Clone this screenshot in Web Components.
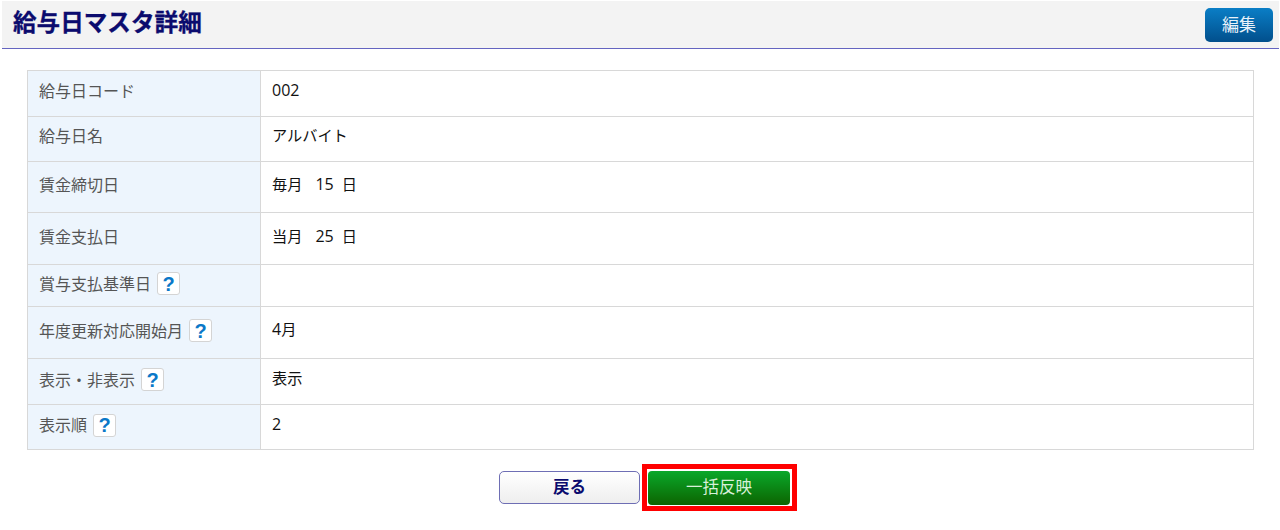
<!DOCTYPE html>
<html lang="ja"><head><meta charset="utf-8"><title>給与日マスタ詳細</title>
<style>
html,body{margin:0;padding:0;background:#fff;font-family:"Open Sans","Noto Sans CJK JP",sans-serif;}
body{width:1280px;height:530px;overflow:hidden;}
.n{font-size:16px;}
.g1{margin-left:13px;}
.g2{margin-left:8px;}
</style></head><body>
<page-header>給与日マスタ詳細<app-btn slot="action" kind="blue">編集</app-btn></page-header>
<detail-table>
<detail-row h="46"><span slot="label">給与日コード</span><span class="n">002</span></detail-row>
<detail-row h="45"><span slot="label">給与日名</span>アルバイト</detail-row>
<detail-row h="51" mid><span slot="label">賃金締切日</span>毎月<span class="n g1">15</span><span class="g2">日</span></detail-row>
<detail-row h="52" mid><span slot="label">賃金支払日</span>当月<span class="n g1">25</span><span class="g2">日</span></detail-row>
<detail-row h="42" top><span slot="label">賞与支払基準日</span><help-mark slot="label"></help-mark></detail-row>
<detail-row h="52" top><span slot="label">年度更新対応開始月</span><help-mark slot="label"></help-mark><span class="n">4</span>月</detail-row>
<detail-row h="46" top><span slot="label">表示・非表示</span><help-mark slot="label"></help-mark>表示</detail-row>
<detail-row h="45" top last><span slot="label">表示順</span><help-mark slot="label"></help-mark><span class="n">2</span></detail-row>
</detail-table>
<button-bar><app-btn kind="back">戻る</app-btn><mark-box><app-btn kind="green">一括反映</app-btn></mark-box></button-bar>
<script>
function def(name,css,html,init){
  customElements.define(name,class extends HTMLElement{
    constructor(){super();this.attachShadow({mode:'open'}).innerHTML='<style>'+css+'</style>'+html;}
    connectedCallback(){if(init)init(this);}
  });
}
const FONT='"Open Sans","Noto Sans CJK JP",sans-serif';
def('page-header',`
:host{display:flex;align-items:center;justify-content:space-between;box-sizing:border-box;height:48px;margin:1px 1px 0 2px;padding:0 6px 0 11px;background:#f3f3f3;border-bottom:1px solid #6464c0;}
.t{font:bold 23.6px/1 ${FONT};color:#0b0b6e;-webkit-text-stroke:.3px #0b0b6e;margin-bottom:4px;}
`,`<div class="t"><slot></slot></div><slot name="action"></slot>`);
def('detail-table',`
:host{display:block;margin:21px 26px 0 27px;border:1px solid #d8d8d8;border-bottom:0;}
`,`<slot></slot>`);
def('detail-row',`
:host{display:grid;grid-template-columns:233px 1fr;box-sizing:border-box;border-bottom:1px solid #d8d8d8;font:15.2px/20px ${FONT};color:#111;}
.l{background:#edf5fd;border-right:1px solid #d8d8d8;padding:0 0 6px 11px;color:#555;display:flex;align-items:center;font-size:16px;}
.v{padding:0 0 8px 11px;display:flex;align-items:center;}
.v span{display:inline-flex;align-items:center;}
:host([top]) .l{padding-bottom:4px;}
:host([mid]) .l{padding-bottom:4px;}
:host([mid]) .v{padding-bottom:6px;}
:host([last]) .v{padding-bottom:6px;}
`,`<div class="l"><slot name="label"></slot></div><div class="v"><span><slot></slot></span></div>`,
el=>{el.style.height=el.getAttribute('h')+'px';});
def('help-mark',`
:host{display:inline-flex;align-items:center;justify-content:center;box-sizing:border-box;width:23px;height:23px;margin-left:6px;background:#fff;border:1px solid #d4d4d4;border-radius:3px;font:bold 20px/1 "Liberation Sans",sans-serif;color:#0a78c8;}
`,`?`);
def('app-btn',`
:host{display:inline-flex;align-items:center;justify-content:center;box-sizing:border-box;font:16.5px/1 ${FONT};border-radius:4px;}
:host([kind=blue]){width:68px;height:34px;background:linear-gradient(#0a7ec6,#014f8c);color:#e8f2fa;border-radius:5px;font-size:17px;}
:host([kind=back]){width:141px;height:33px;background:linear-gradient(#fff,#eee);border:1px solid #6e6eb4;border-radius:5px;color:#0b0b6e;font-weight:bold;}
:host([kind=green]){width:142px;height:34px;background:linear-gradient(#0aa82a,#0c6400);color:#d8f0d8;}
`,`<slot></slot>`);
def('mark-box',`
:host{display:block;box-sizing:border-box;border:5px solid #f00;padding:1.5px 2px 1.5px 1px;line-height:0;}
`,`<slot></slot>`);
def('button-bar',`
:host{display:flex;gap:2px;margin:14px 0 0 499px;align-items:center;}
`,`<slot></slot>`);
</script>
</body></html>
